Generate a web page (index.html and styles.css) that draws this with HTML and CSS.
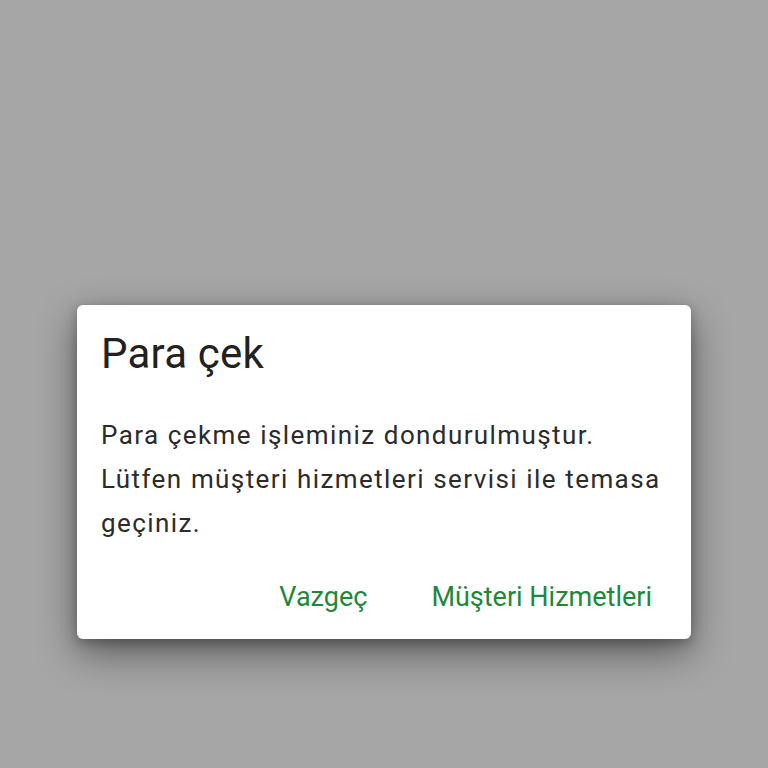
FILE: index.html
```html
<!DOCTYPE html>
<html lang="tr">
<head>
    <meta charset="UTF-8" />
    <meta name="viewport" content="width=device-width, initial-scale=1.0" />
    <title>Para çek</title>
    <link rel="stylesheet" href="styles.css">
</head>
<body>
    <div class="dialog">
        <h2 class="dialog-title">Para çek</h2>
        <p class="dialog-text">Para çekme işleminiz dondurulmuştur. Lütfen müşteri hizmetleri servisi ile temasa geçiniz.</p>
        <div class="dialog-actions">
            <button class="dialog-button">Vazgeç</button>
            <button class="dialog-button">Müşteri Hizmetleri</button>
        </div>
    </div>
</body>
</html>
```

FILE: styles.css
```css
html, body {
    height: 100%;
}
body {
    margin: 0;
    background-color: #a6a6a6;
    font-family: Roboto, "Noto Sans", sans-serif;
    display: flex;
    justify-content: center;
    align-items: flex-start;
    padding-top: 305px;
    box-sizing: border-box;
}
.dialog {
    width: 614px;
    height: 334px;
    box-sizing: border-box;
    background: white;
    border-radius: 6px;
    box-shadow: 0 14px 40px rgba(0, 0, 0, 0.45), 0 4px 12px rgba(0, 0, 0, 0.25);
    padding: 23px 18px 0 24px;
}
.dialog-title {
    margin: 0;
    font-size: 42px;
    font-weight: 400;
    letter-spacing: 0.2px;
    color: #212121;
    line-height: 52px;
}
.dialog-text {
    margin: 33px 0 0 0;
    font-size: 26px;
    letter-spacing: 1.4px;
    word-spacing: 0.5px;
    line-height: 44px;
    color: #2b2b2b;
}
.dialog-actions {
    display: flex;
    justify-content: flex-end;
    gap: 32px;
    margin-top: 32px;
    margin-right: 5px;
}
.dialog-button {
    background: none;
    border: none;
    padding: 0 16px;
    font-family: inherit;
    font-size: 27px;
    color: #1d883b;
    line-height: 40px;
    cursor: pointer;
}
```
